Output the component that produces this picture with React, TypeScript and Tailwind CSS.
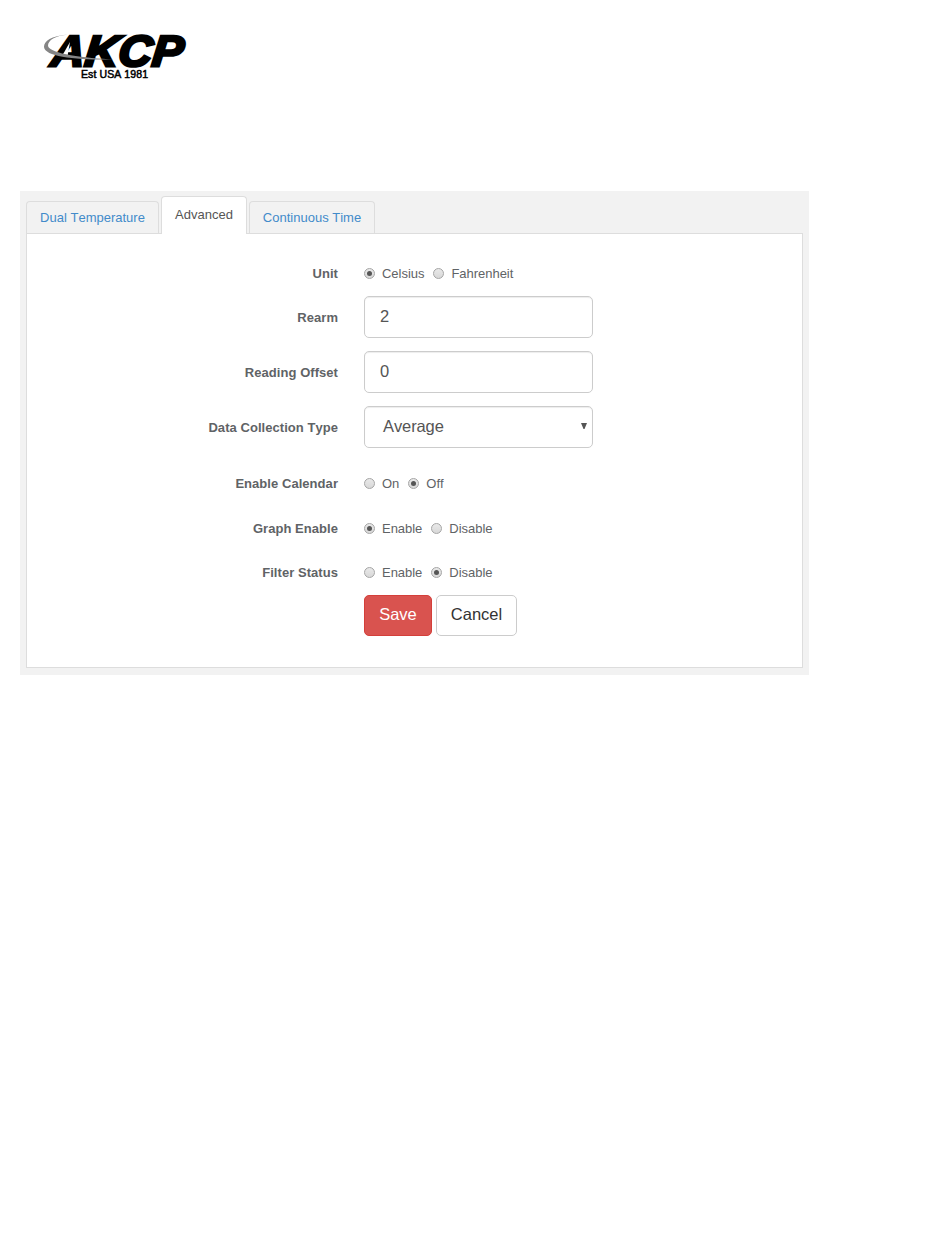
import type { ReactNode } from "react";

function Logo() {
  return (
    <svg className="ml-10 mt-7 block h-[56px] w-[152px]" viewBox="40 28 152 56">
      <g fontFamily="Liberation Sans, Arial, sans-serif">
        <g transform="translate(50 65.5) skewX(-6)">
          <text x="0" y="0" fontSize="43.5" fontWeight="700" fontStyle="italic" stroke="#000" strokeWidth="2.8" textLength="132" lengthAdjust="spacingAndGlyphs">
            AKCP
          </text>
        </g>
        <path d="M70 42 L62 56 H67.5Z" fill="#fff" />
        <path d="M68 34.5 C51 36 44 41 44 47 C45 57 76 60 114 59.5 C85 58 50 54 48 46 C48 40 55 36 68 34.5Z" fill="#858585" />
        <text x="81" y="78" fontSize="10.5" stroke="#000" strokeWidth=".5" textLength="67">
          Est USA 1981
        </text>
      </g>
    </svg>
  );
}

function Radio({ label, checked }: { label: string; checked?: boolean }) {
  return (
    <span className="flex items-center">
      <span className="mr-[7px] flex size-[11px] items-center justify-center rounded-full border border-[#a5a5a5] bg-linear-to-b from-[#e9e9e9] to-[#d8d8d8]">
        {checked && <span className="size-[5px] rounded-full bg-[#555]" />}
      </span>
      <span className="-mb-[2px] tracking-[-0.03px]">{label}</span>
    </span>
  );
}

function Row({ label, className, children }: { label: string; className: string; children: ReactNode }) {
  return (
    <div className={`flex items-center ${className}`}>
      <div className="-mb-[2px] mr-[26px] w-[311px] text-right font-bold tracking-[0.05px]">{label}</div>
      {children}
    </div>
  );
}

const field =
  "flex h-[42px] w-[229px] items-center rounded-[5px] border border-[#ccc] px-[15px] pb-[2px] text-[16.5px] tracking-[-0.1px] text-[#555] shadow-[inset_0_1px_1px_rgba(0,0,0,0.075)]";

export default function App() {
  return (
    <main className="flow-root min-h-[1254px] bg-white font-['Liberation_Sans',Arial,sans-serif] text-[13px] leading-[18px] text-[#5f6366] [font-kerning:none]">
      <Logo />
      <section className="ml-5 mt-[107px] h-[484px] w-[789px] bg-[#f2f2f2] px-[6px] pt-[5px]">
        <nav className="flex h-[37px] items-end gap-[2px] text-[#428bca]">
          <div className="flex h-[32px] w-[133px] items-center justify-center rounded-t-[4px] border border-b-0 border-[#ddd]">Dual Temperature</div>
          <div className="relative -mb-px flex h-[38px] w-[86px] items-center justify-center rounded-t-[4px] border border-b-0 border-[#ddd] bg-white pb-[2px] text-[#555]">Advanced</div>
          <div className="flex h-[32px] w-[126px] items-center justify-center rounded-t-[4px] border border-b-0 border-[#ddd]">Continuous Time</div>
        </nav>
        <div className="h-[435px] w-[777px] border border-[#ddd] bg-white pt-[30px]">
          <Row label="Unit" className="h-[18px]">
            <div className="flex gap-[9px]"><Radio label="Celsius" checked /><Radio label="Fahrenheit" /></div>
          </Row>
          <Row label="Rearm" className="mt-[14px]"><div className={field}>2</div></Row>
          <Row label="Reading Offset" className="mt-[13px]"><div className={field}>0</div></Row>
          <Row label="Data Collection Type" className="mt-[13px]">
            <div className={field}>
              <span className="ml-[3px]">Average</span>
              <svg className="-mr-[10px] ml-auto h-[6px] w-[6px]" viewBox="0 0 6 6"><path d="M0 0H6L3.5 6H2.5Z" fill="#555" /></svg>
            </div>
          </Row>
          <Row label="Enable Calendar" className="mt-[26px] h-[18px]">
            <div className="flex gap-[9px]"><Radio label="On" /><Radio label="Off" checked /></div>
          </Row>
          <Row label="Graph Enable" className="mt-[27px] h-[18px]">
            <div className="flex gap-[9px]"><Radio label="Enable" checked /><Radio label="Disable" /></div>
          </Row>
          <Row label="Filter Status" className="mt-[26px] h-[18px]">
            <div className="flex gap-[9px]"><Radio label="Enable" /><Radio label="Disable" checked /></div>
          </Row>
          <div className="ml-[337px] mt-[14px] flex gap-[4px] text-[16.5px]">
            <button className="h-[41px] w-[68px] rounded-[5px] border border-[#d43f3a] bg-[#d9534f] pb-[3px] text-white">Save</button>
            <button className="h-[41px] w-[81px] rounded-[5px] border border-[#ccc] bg-white pb-[3px] text-[#333]">Cancel</button>
          </div>
        </div>
      </section>
    </main>
  );
}
